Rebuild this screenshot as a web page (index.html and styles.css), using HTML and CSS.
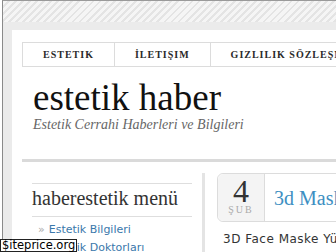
FILE: index.html
```html
<!DOCTYPE html>
<html lang="tr">
<head>
  <meta charset="UTF-8">
  <title>estetik haber</title>
  <link rel="stylesheet" href="styles.css">
</head>
<body>
  <div class="frame">
    <div class="stripes"></div>
    <div class="wrap">
      <div class="page">
        <!-- Top menu -->
        <ul class="nav">
          <li>ESTETIK</li>
          <li>İLETIŞIM</li>
          <li>GIZLILIK SÖZLEŞMESI</li>
        </ul>

        <div class="brand">
          <h1>estetik haber</h1>
          <p>Estetik Cerrahi Haberleri ve Bilgileri</p>
        </div>

        <div class="content">
          <aside class="sidebar">
            <h3>haberestetik menü</h3>
            <ul>
              <li><a href="#">Estetik Bilgileri</a></li>
              <li><a href="#">Estetik Doktorları</a></li>
            </ul>
          </aside>

          <main class="main">
            <div class="post-head">
              <div class="date">
                <div class="day">4</div>
                <div class="month">ŞUB</div>
              </div>
              <div class="title"><a href="#">3d Maske Yüz Germe</a></div>
            </div>
            <p class="excerpt">3D Face Maske Yüz Germe ile cilt bakımı</p>
          </main>
        </div>
      </div>
    </div>
  </div>

  <div class="watermark">$iteprice.org</div>
</body>
</html>
```

FILE: styles.css
```css
html, body {
  margin: 0;
  padding: 0;
  height: 100%;
}

* {
  box-sizing: border-box;
}

body {
  background-color: #fff;
  overflow: hidden;
  font-family: "Liberation Serif", serif;
}

ul {
  list-style: none;
  margin: 0;
  padding: 0;
}

a {
  text-decoration: none;
}

/* outer frame */
.frame {
  width: 700px;
  height: 100vh;
  margin-left: 2px;
  border-top: 1px solid #9a9a9a;
  border-left: 1px solid #8a8a8a;
}

.stripes {
  height: 21px;
  background: repeating-linear-gradient(135deg, #f5f5f5 0 3px, #e4e4e4 3px 5px);
}

.wrap {
  background-color: #ebebeb;
  padding: 8px 0 0 9px;
  height: 100%;
}

.page {
  background-color: #fff;
  padding: 12px 10px 0;
  height: 100%;
}

/* nav */
.nav {
  display: flex;
  height: 25px;
  border: 1px solid #dcdcdc;
}
.nav li {
  padding: 0 20px;
  border-right: 1px solid #dcdcdc;
  line-height: 23px;
  font-size: 10px;
  font-weight: bold;
  letter-spacing: 1px;
  color: #2a2a2a;
  white-space: nowrap;
}

/* brand */
.brand {
  margin: 12px 0 0 11px;
}
.brand h1 {
  margin: 0;
  font-size: 37px;
  line-height: 37px;
  font-weight: normal;
  color: #111;
}
.brand p {
  margin: 0;
  font-size: 14px;
  line-height: 18px;
  font-style: italic;
  color: #666;
}

/* content */
.content {
  display: flex;
  margin-top: 25px;
  border-top: 3px solid #dadada;
}

.sidebar {
  width: 160px;
  margin: 21px 0 0 10px;
}
.sidebar h3 {
  margin: 0;
  font-size: 20px;
  line-height: 28px;
  padding-bottom: 4px;
  font-weight: normal;
  color: #333;
  border-top: 1px solid #dedede;
  border-bottom: 1px solid #dedede;
}
.sidebar ul {
  margin-top: 4px;
  font-family: "DejaVu Sans", sans-serif;
  font-size: 11px;
  line-height: 18px;
}
.sidebar li {
  padding-left: 6px;
}
.sidebar li::before {
  content: "»";
  color: #aaa;
  margin-right: 4px;
}
.sidebar a {
  color: #3a78ab;
}

.main {
  margin: 11px 0 0 10px;
  padding-left: 12px;
  border-left: 3px solid #e4e4e4;
  width: 460px;
}

.post-head {
  display: flex;
  height: 49px;
  border: 1px solid #dcdcdc;
  border-radius: 6px 0 0 6px;
}
.date {
  width: 47px;
  background-color: #f4f4f4;
  border-right: 1px solid #dcdcdc;
  border-radius: 6px 0 0 6px;
  text-align: center;
  padding-top: 3px;
}
.day {
  font-size: 32px;
  line-height: 28px;
  color: #333;
}
.month {
  font-size: 10px;
  line-height: 12px;
  letter-spacing: 2px;
  color: #aaa;
  margin-top: -1px;
}
.title {
  display: flex;
  align-items: center;
  padding-left: 9px;
  font-size: 20px;
  line-height: 22px;
  white-space: nowrap;
}
.title a {
  color: #3d8fc2;
}

.excerpt {
  margin: 8px 0 0 6px;
  font-family: "DejaVu Sans", sans-serif;
  font-size: 12px;
  line-height: 18px;
  letter-spacing: 0.5px;
  color: #333;
  white-space: nowrap;
}

/* site badge in the corner */
.watermark {
  position: absolute;
  left: 0;
  bottom: 0;
  padding: 0 1px;
  background-color: #fff;
  border: 1px solid #222;
  font-family: "DejaVu Sans", sans-serif;
  font-size: 11.5px;
  line-height: 11px;
  color: #000;
}
```
